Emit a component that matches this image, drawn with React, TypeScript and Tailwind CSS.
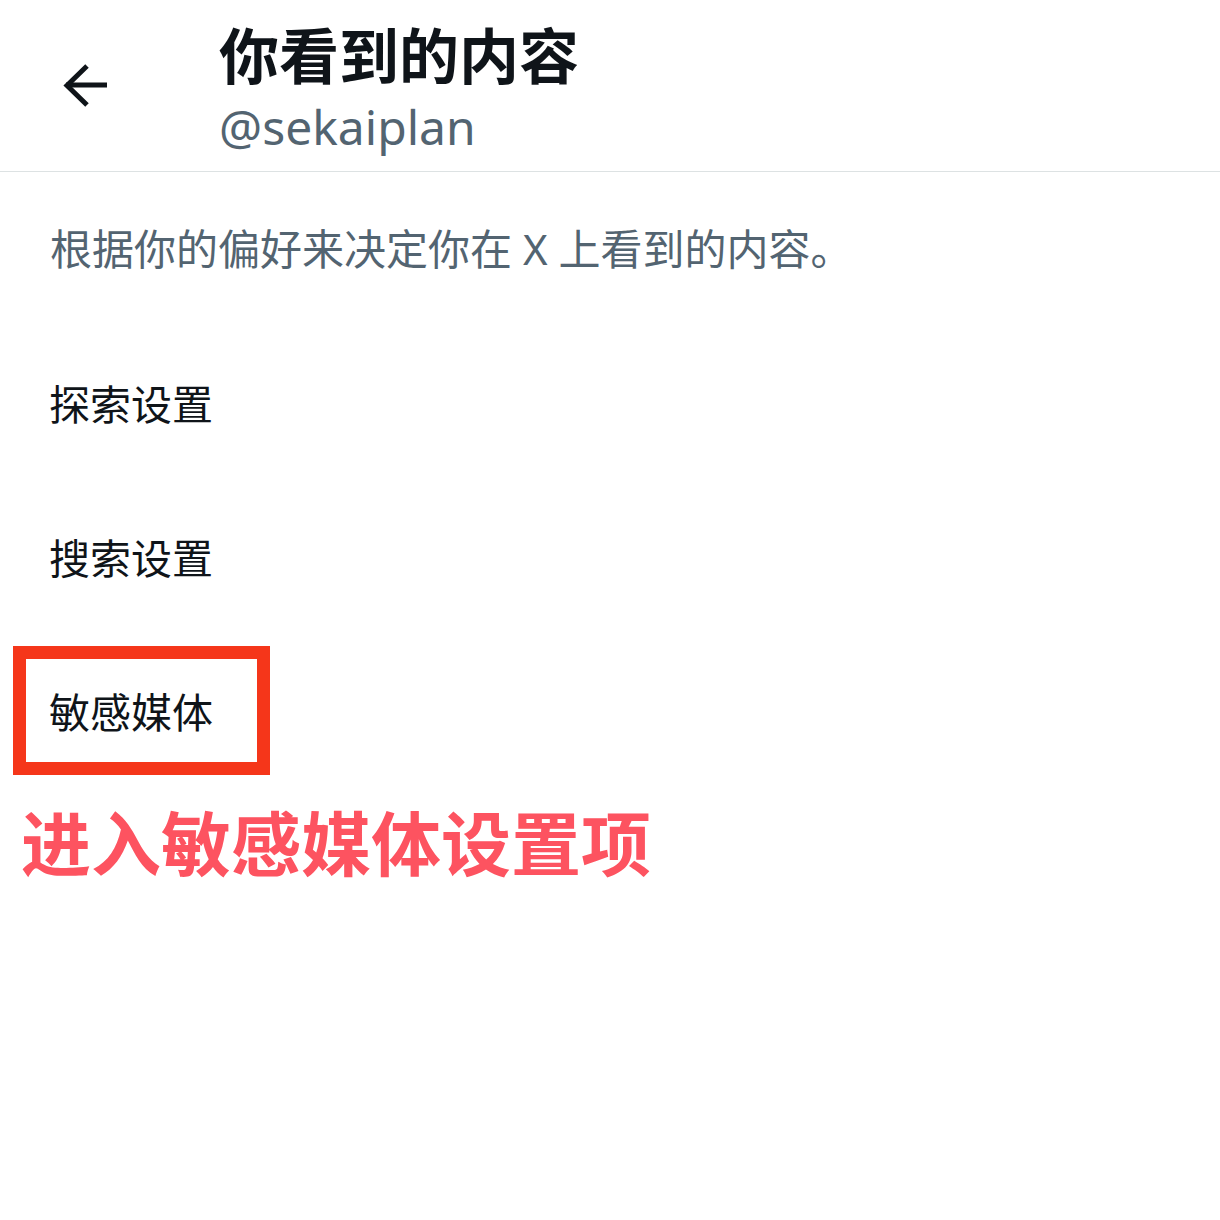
import React from 'react';

const cjk = "font-['Noto_Sans','Noto_Sans_CJK_SC',sans-serif]";

const BackArrow = () => (
  <svg viewBox="0 0 48 48" className="h-12 w-12" fill="none">
    <path d="M47 24H6" stroke="#0f1419" strokeWidth="5" />
    <path d="M27 5L7 24.5L27 44" stroke="#0f1419" strokeWidth="5" strokeLinejoin="miter" />
  </svg>
);

const items = ['探索设置', '搜索设置', '敏感媒体'];

export default function App() {
  return (
    <div className={`min-h-[1220px] w-[1220px] bg-white ${cjk}`}>
      {/* Header */}
      <header className="flex border-b border-[#dde2e3] pt-5 pb-[15px]">
        <div className="flex w-[219px] items-start pl-[60px] pt-[41px]">
          <BackArrow />
        </div>
        <div className="flex flex-col">
          <h1 className="text-[60px] font-bold leading-[72px] text-[#0f1419]">你看到的内容</h1>
          <div className="mt-1.5 text-[48px] leading-[58px] text-[#536471]">@sekaiplan</div>
        </div>
      </header>

      <p className="mt-[47px] pl-[50px] text-[42px] leading-[60px] text-[#536471]">
        根据你的偏好来决定你在 X 上看到的内容。
      </p>

      <div className="mt-12 flex flex-col">
        {items.map((label, i) => (
          <div key={label} className="relative flex h-[154px] items-center pl-[49px]">
            <span className="text-[41px] leading-none text-[#0f1419]">{label}</span>
            {i === 2 && (
              <div className="absolute left-[13px] top-[11px] h-[129px] w-[257px] border-[13px] border-[#f5361a]" />
            )}
          </div>
        ))}
      </div>

      <div className="mt-5 pl-[21px] text-[70px] font-bold leading-[70px] text-[#fd5360]">
        进入敏感媒体设置项
      </div>
    </div>
  );
}
